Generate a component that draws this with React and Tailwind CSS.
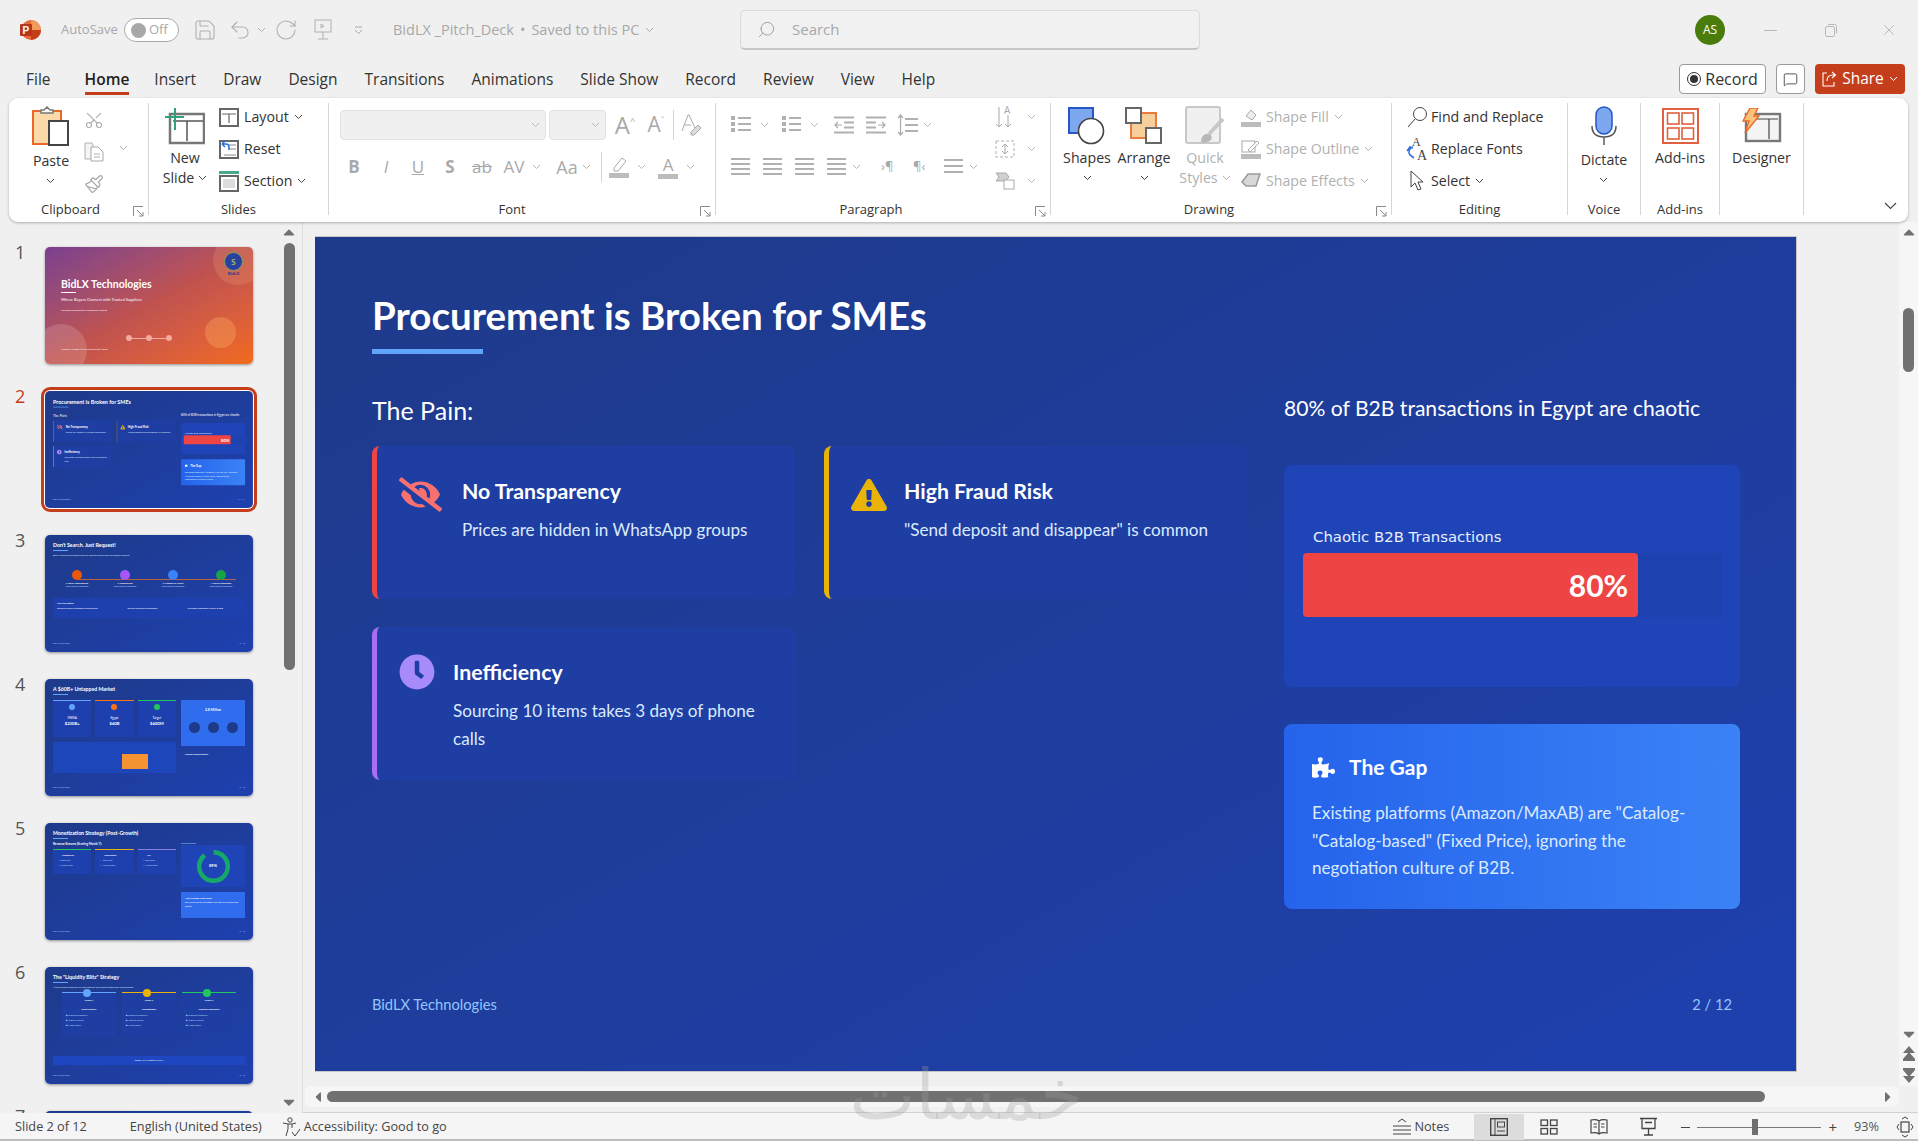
import React from 'react';
import { FaEyeSlash, FaExclamationTriangle, FaClock, FaPuzzlePiece, FaCaretUp, FaCaretDown, FaCaretLeft, FaCaretRight } from 'react-icons/fa';
import { Search, Scissors, Paintbrush, Undo2, RotateCw, Save, X, MessageSquare } from 'lucide-react';

const UI = 'font-["Open_Sans",sans-serif]';
const SLIDE = 'font-["Lato",sans-serif]';

const Chev = ({ c = '#555', className = '' }) => (
  <svg width="9" height="6" viewBox="0 0 9 6" className={`shrink-0 ${className}`}>
    <path d="M1 1l3.5 3.5L8 1" fill="none" stroke={c} strokeWidth="1" />
  </svg>
);

const Launcher = () => (
  <svg width="11" height="11" viewBox="0 0 11 11">
    <path d="M.5 10V.5H10M4 4l6 6M10 6v4H6" fill="none" stroke="#8a8a8a" strokeWidth="1" />
  </svg>
);

const Lines = ({ w = 20, rows = 3, gap = 6, c = '#b0b0b0', dots = false }) => (
  <svg width={w} height={rows * gap + 2} viewBox={`0 0 ${w} ${rows * gap + 2}`} className="shrink-0">
    {Array.from({ length: rows }).map((_, i) => (
      <rect key={i} x={dots ? 7 : 0} y={i * gap + 2} width={dots ? w - 7 : w} height="2" fill={c} />
    ))}
    {dots && Array.from({ length: rows }).map((_, i) => (
      <rect key={i} x="0" y={i * gap + 1} width="4" height="4" fill={c} />
    ))}
  </svg>
);

const Indent = ({ flip }) => (
  <svg width="20" height="20" viewBox="0 0 20 20" className={`shrink-0 ${flip ? '-scale-x-100' : ''}`}>
    <path d="M0 2.500h20M10 7.500h10M10 12.500h10M0 17.500h20" stroke="#b0b0b0" strokeWidth="2" />
    <path d="M8 10H1M4 7l-3 3 3 3" fill="none" stroke="#a9a9a9" strokeWidth="1.2" />
  </svg>
);

const LineSpacing = () => (
  <svg width="21" height="22" viewBox="0 0 21 22" className="shrink-0">
    <path d="M8 5h13M8 11h13M8 17h13" stroke="#b0b0b0" strokeWidth="2" />
    <path d="M3.500 1v20M1 4l2.500-3L6 4M1 18l2.500 3L6 18" fill="none" stroke="#a9a9a9" strokeWidth="1.200" />
  </svg>
);

// ---- big ribbon icons ----
const PasteIcon = () => (
  <svg width="38" height="40" viewBox="0 0 38 40">
    <rect x="1" y="5" width="28" height="33" fill="#fbd9a8" stroke="#e9692c" strokeWidth="2" />
    <path d="M9 7V4h3l3-3 3 3h3v3z" fill="#fff" stroke="#777" strokeWidth="1.5" />
    <rect x="17" y="15" width="19" height="24" fill="#fff" stroke="#444" strokeWidth="2" />
  </svg>
);

const CopyIcon = () => (
  <svg width="20" height="20" viewBox="0 0 20 20">
    <path d="M1 1h7l1 2v14H1z" fill="#f4f4f4" stroke="#b0b0b0" />
    <path d="M7 5h7l5 5v9H7z" fill="#fff" stroke="#a9a9a9" />
    <path d="M10 12h6M10 15h6" stroke="#b0b0b0" />
  </svg>
);

const NewSlideIcon = () => (
  <svg width="40" height="38" viewBox="0 0 40 38">
    <rect x="5" y="7" width="34" height="29" fill="#fff" stroke="#777" strokeWidth="2.5" />
    <path d="M8 14h30M22 14v20" stroke="#555" strokeWidth="1.5" />
    <path d="M10 1v22M0 10h19" stroke="#2ea17f" strokeWidth="2" />
  </svg>
);

const SmallSlide = ({ variant }) => (
  <svg width="20" height="21" viewBox="0 0 20 21" className="shrink-0">
    {variant === 'section' && <rect x="0" y="0" width="20" height="3" fill="#4aa88d" />}
    <rect x="1" y={variant === 'section' ? 5 : 2} width="18" height={variant === 'section' ? 15 : 17} fill="#fff" stroke="#666" strokeWidth="2" />
    {variant === 'layout' && <path d="M3 7h14M10 7v9" stroke="#666" strokeWidth="1.2" />}
    {variant === 'section' && <rect x="4" y="8" width="12" height="9" fill="#ddd" />}
    {variant === 'reset' && (
      <>
        <path d="M9 6h8M11 10h6M5 16h12" stroke="#888" strokeWidth="1" />
        <path d="M3 5l3-3M3 5l3 3M3 5h4a3 3 0 0 1 3 3v3" fill="none" stroke="#2f6fe0" strokeWidth="1.6" />
      </>
    )}
  </svg>
);

const ShapesIcon = () => (
  <svg width="38" height="38" viewBox="0 0 38 38">
    <rect x="1" y="1" width="24" height="25" fill="#7da7ee" stroke="#2456c5" strokeWidth="2" />
    <circle cx="23" cy="24" r="12.5" fill="#fff" stroke="#444" strokeWidth="1.6" />
  </svg>
);

const ArrangeIcon = () => (
  <svg width="38" height="38" viewBox="0 0 38 38">
    <rect x="6" y="6" width="25" height="25" fill="#f7cf9c" stroke="#e87c3c" strokeWidth="2" />
    <rect x="1" y="1" width="15" height="15" fill="#fff" stroke="#666" strokeWidth="2" />
    <rect x="21" y="21" width="15" height="15" fill="#fff" stroke="#666" strokeWidth="2" />
  </svg>
);

const QuickIcon = () => (
  <svg width="40" height="40" viewBox="0 0 40 40">
    <rect x="1" y="1" width="34" height="36" rx="2" fill="#f0f0f0" stroke="#c8c8c8" strokeWidth="2" />
    <path d="M38 13L24 28" stroke="#c8c8c8" strokeWidth="4" />
    <path d="M16 36c0-6 4-9 8-8 3 1 3 4 2 6-2 2-6 3-10 2z" fill="#b8b8b8" />
  </svg>
);

const MicIcon = () => (
  <svg width="26" height="40" viewBox="0 0 26 40">
    <rect x="5" y="1" width="16" height="27" rx="8" fill="#7da7ee" stroke="#2456c5" strokeWidth="1.5" />
    <path d="M1 20c0 8 5 11 12 11s12-3 12-11" fill="none" stroke="#555" strokeWidth="1.5" />
    <path d="M13 31v8" stroke="#777" strokeWidth="1.8" />
  </svg>
);

const AddinsIcon = () => (
  <svg width="37" height="36" viewBox="0 0 37 36">
    <rect x="1" y="1" width="35" height="34" fill="#fff" stroke="#e0603f" strokeWidth="2" />
    <rect x="5.500" y="5" width="11.500" height="11" fill="none" stroke="#e0603f" strokeWidth="1.6" />
    <rect x="20" y="5" width="11.500" height="11" fill="none" stroke="#e0603f" strokeWidth="1.6" />
    <rect x="5.500" y="20" width="11.500" height="11" fill="none" stroke="#e0603f" strokeWidth="1.6" />
    <rect x="20" y="20" width="11.500" height="11" fill="none" stroke="#e0603f" strokeWidth="1.6" />
  </svg>
);

const DesignerIcon = () => (
  <svg width="40" height="36" viewBox="0 0 40 36">
    <rect x="4" y="6" width="34" height="27" fill="#f4f4f4" stroke="#777" strokeWidth="2.4" />
    <path d="M8 11h28M27 11v20" stroke="#444" strokeWidth="1.2" />
    <path d="M8 0h8l-4 8h5L3 25l4-12H1z" fill="#fbc27a" stroke="#e8692c" strokeWidth="1.4" />
  </svg>
);

const Big = ({ icon, lines, chev, gray, width, top = 'mt-0' }) => (
  <div className={`flex flex-col items-center shrink-0 pt-[1px] ${width}`}>
    <div className="h-[44px] flex items-center justify-center">{icon}</div>
    <div className={`flex flex-col items-center text-[14.2px] leading-[20px] ${top} ${gray ? 'text-[#b0b0b0]' : 'text-[#333]'}`}>
      {lines.map((l, i) => (
        <span key={l} className="flex items-center gap-[4px]">
          {l}
          {chev === 'inline' && i === lines.length - 1 && <Chev c={gray ? '#b0b0b0' : '#444'} />}
        </span>
      ))}
      {chev === 'below' && <Chev c="#444" className="mt-[7px]" />}
    </div>
  </div>
);

const RowItem = ({ icon, label, chev, gray, iconW = 'w-[20px]', gap = 'ml-[5px]' }) => (
  <div className={`h-[28px] flex items-center text-[14.2px] whitespace-nowrap ${gray ? 'text-[#b0b0b0]' : 'text-[#333]'}`}>
    <div className={`flex justify-center ${iconW}`}>{icon}</div>
    <span className={gap}>{label}</span>
    {chev && <Chev c={gray ? '#b0b0b0' : '#444'} className="ml-[5px]" />}
  </div>
);

const Group = ({ width, label, labelPad = '', launcher, last, children }) => (
  <div className={`relative flex flex-col shrink-0 h-[112px] ${width} ${last ? '' : 'border-r border-[#d6d6d6]'}`}>
    <div className="h-[97px] flex shrink-0">{children}</div>
    <div className={`h-[20px] shrink-0 flex items-center justify-center text-[13px] text-[#333] ${labelPad}`}>{label}</div>
    {launcher && <div className="absolute right-[4px] bottom-[-2px] flex"><Launcher /></div>}
  </div>
);

const G = ({ children, className = '' }) => (
  <span className={`flex items-center justify-center text-[#a9a9a9] ${className}`}>{children}</span>
);

const Ribbon = () => (
  <div className={`ml-[9px] w-[1899px] h-[124px] shrink-0 bg-white rounded-[9px] shadow-[0_1px_3px_rgba(0,0,0,0.28)] flex pt-[5px] relative z-10 ${UI}`}>
    <Group width="w-[140px]" label="Clipboard" labelPad="pr-[16px]" launcher>
      <Big width="w-[60px] ml-[12px]" icon={<PasteIcon />} lines={['Paste']} chev="below" top="mt-[3px]" />
      <div className="flex flex-col w-[26px] items-center pt-[1px]">
        <div className="h-[32px] flex items-center"><Scissors size={20} color="#a9a9a9" strokeWidth={1.3} className="-rotate-90" /></div>
        <div className="h-[32px] flex items-center"><CopyIcon /></div>
        <div className="h-[32px] flex items-center"><Paintbrush size={20} color="#a9a9a9" strokeWidth={1.5} /></div>
      </div>
      <div className="ml-[12px] h-[90px] flex items-center"><Chev c="#b0b0b0" /></div>
    </Group>

    <Group width="w-[180px]" label="Slides">
      <Big width="w-[72px]" icon={<NewSlideIcon />} lines={['New', 'Slide']} chev="inline" />
      <div className="flex flex-col gap-[4px] ml-[-2px]">
        <RowItem icon={<SmallSlide variant="layout" />} label="Layout" chev />
        <RowItem icon={<SmallSlide variant="reset" />} label="Reset" />
        <RowItem icon={<SmallSlide variant="section" />} label="Section" chev />
      </div>
    </Group>

    <Group width="w-[387px]" label="Font" labelPad="pr-[20px]" launcher>
      <div className="flex flex-col ml-[11px] pt-[7px]">
        <div className="flex items-center h-[30px]">
          <div className="w-[206px] h-[30px] bg-[#f0f0f0] border border-[#e2e2e2] rounded-[4px] flex items-center justify-end pr-[5px]"><Chev c="#b8b8b8" /></div>
          <div className="w-[57px] h-[30px] ml-[3px] bg-[#f0f0f0] border border-[#e2e2e2] rounded-[4px] flex items-center justify-end pr-[5px]"><Chev c="#b8b8b8" /></div>
          <G className="w-[18px] ml-[10px] text-[24px]">A<sup className="text-[9px]">^</sup></G>
          <G className="w-[16px] ml-[14px] text-[21px]">A<sup className="text-[9px]">ˇ</sup></G>
          <div className="w-px h-[30px] bg-[#d6d6d6] ml-[9px]" />
          <svg className="ml-[7px]" width="21" height="24" viewBox="0 0 21 24"><path d="M1 18L7 2h1l6 13M3.500 12H10" fill="none" stroke="#a9a9a9" /><path d="M10 19l7-7 3 3-7 7h-3z" fill="#dcdcdc" stroke="#a9a9a9" /></svg>
        </div>
        <div className="flex items-center h-[30px] mt-[12px] text-[17px]">
          <G className="w-[32px] ml-[-2px] font-bold">B</G>
          <G className="w-[32px] italic">I</G>
          <G className="w-[32px] underline">U</G>
          <G className="w-[32px] font-bold">S</G>
          <G className="w-[32px] line-through">ab</G>
          <G className="w-[32px]">AV</G>
          <Chev c="#b8b8b8" className="ml-[2px]" />
          <G className="w-[30px] ml-[11px] text-[18px]">Aa</G>
          <Chev c="#b8b8b8" />
          <div className="w-px h-[30px] bg-[#d6d6d6] ml-[10px]" />
          <div className="w-[26px] ml-[4px] flex flex-col items-center">
            <svg width="20" height="22" viewBox="0 0 20 22"><path d="M5 12l8-10 4 3-8 10H5z" fill="none" stroke="#a9a9a9" /><rect y="17" width="20" height="5" fill="#bcbcbc" /></svg>
          </div>
          <Chev c="#b8b8b8" className="ml-[5px]" />
          <div className="w-[24px] ml-[10px] flex flex-col items-center text-[#a9a9a9] leading-[18px]">
            A<div className="w-[20px] h-[5px] bg-[#bcbcbc]" />
          </div>
          <Chev c="#b8b8b8" className="ml-[6px]" />
        </div>
      </div>
    </Group>

    <Group width="w-[335px]" label="Paragraph" labelPad="pr-[24px]" launcher>
      <div className="w-[279px] pt-[7px] pl-[15px] flex flex-col">
        <div className="flex items-center h-[30px]">
          <div className="w-[51px] flex items-center gap-[9px]"><Lines dots /><Chev c="#b8b8b8" /></div>
          <div className="w-[52px] flex items-center gap-[9px]"><Lines dots w={19} /><Chev c="#b8b8b8" /></div>
          <div className="w-[32px] flex"><Indent /></div>
          <div className="w-[31px] flex"><Indent flip /></div>
          <div className="flex items-center gap-[5px]"><LineSpacing /><Chev c="#b8b8b8" /></div>
        </div>
        <div className="flex items-center h-[30px] mt-[12px]">
          <div className="w-[32px] flex"><Lines w={19} rows={4} gap={5} /></div>
          <div className="w-[32px] flex"><Lines w={19} rows={4} gap={5} /></div>
          <div className="w-[32px] flex"><Lines w={19} rows={4} gap={5} /></div>
          <div className="w-[54px] flex items-center gap-[6px]"><Lines w={19} rows={4} gap={5} /><Chev c="#b8b8b8" /></div>
          <div className="w-[32px] text-[13px] text-[#a9a9a9]">›¶</div>
          <div className="w-[31px] text-[13px] text-[#a9a9a9]">¶‹</div>
          <div className="flex items-center gap-[6px]"><Lines w={19} rows={3} gap={6} /><Chev c="#b8b8b8" /></div>
        </div>
      </div>
      <div className="flex flex-col gap-[4px]">
        <div className="h-[28px] flex items-center gap-[12px]"><svg width="20" height="24" viewBox="0 0 20 24"><path d="M4 2v20M1 19l3 3 3-3M13 10v12M10 19l3 3 3-3" fill="none" stroke="#a9a9a9" /><text x="9" y="9" fontSize="10" fill="#a9a9a9" fontFamily="Open Sans">A</text></svg><Chev c="#b8b8b8" /></div>
        <div className="h-[28px] flex items-center gap-[12px]"><svg width="20" height="20" viewBox="0 0 20 20"><rect x="1" y="2" width="18" height="16" fill="none" stroke="#b0b0b0" strokeDasharray="3 2" /><path d="M10 5v10M7 8l3-3 3 3M7 12l3 3 3-3" fill="none" stroke="#a9a9a9" /></svg><Chev c="#b8b8b8" /></div>
        <div className="h-[28px] flex items-center gap-[12px]"><svg width="20" height="18" viewBox="0 0 20 18"><path d="M1 1h10l3 4-3 4H1l3-4z" fill="#cfcfcf" stroke="#a9a9a9" /><rect x="9" y="8" width="10" height="9" fill="#fff" stroke="#a9a9a9" /></svg><Chev c="#b8b8b8" /></div>
      </div>
    </Group>

    <Group width="w-[341px]" label="Drawing" labelPad="pr-[24px]" launcher>
      <Big width="w-[62px] ml-[5px]" icon={<ShapesIcon />} lines={['Shapes']} chev="below" />
      <Big width="w-[52px]" icon={<ArrangeIcon />} lines={['Arrange']} chev="below" />
      <Big width="w-[70px]" icon={<QuickIcon />} lines={['Quick', 'Styles']} chev="inline" gray />
      <div className="flex flex-col gap-[4px] ml-[1px]">
        <RowItem gray icon={<svg width="20" height="20" viewBox="0 0 20 20"><path d="M5 9l5-6 5 5-4 5z" fill="#eee" stroke="#a9a9a9" /><rect y="15" width="20" height="5" fill="#bcbcbc" /></svg>} label="Shape Fill" chev />
        <RowItem gray icon={<svg width="20" height="20" viewBox="0 0 20 20"><rect x="1" y="2" width="13" height="11" fill="none" stroke="#a9a9a9" /><path d="M7 11l9-9 2 2-9 9z" fill="#fff" stroke="#a9a9a9" /><rect y="15" width="20" height="5" fill="#bcbcbc" /></svg>} label="Shape Outline" chev />
        <RowItem gray icon={<svg width="20" height="18" viewBox="0 0 20 18"><path d="M1 10l6-8h12l-4 12H5z" fill="#d8d8d8" stroke="#9a9a9a" strokeWidth="1.5" /></svg>} label="Shape Effects" chev />
      </div>
    </Group>

    <Group width="w-[176px]" label="Editing">
      <div className="flex flex-col gap-[4px] ml-[14px]">
        <RowItem iconW="w-[22px]" gap="ml-[3px]" icon={<svg width="21" height="22" viewBox="0 0 21 22"><circle cx="13" cy="8" r="6.500" fill="none" stroke="#444" /><path d="M8 13L1 21" stroke="#444" /></svg>} label="Find and Replace" />
        <RowItem iconW="w-[22px]" gap="ml-[3px]" icon={<svg width="22" height="26" viewBox="0 0 22 26"><text x="6" y="10" fontSize="12" fill="#444" fontFamily="Liberation Serif">A</text><text x="11" y="24" fontSize="14" fill="#444" fontFamily="Liberation Serif">A</text><path d="M7 11a5 5 0 0 0-3 8l4 3M1 15l3-4 3 1" fill="none" stroke="#2f6fe0" strokeWidth="1.6" /></svg>} label="Replace Fonts" />
        <RowItem iconW="w-[22px]" gap="ml-[3px]" icon={<svg width="16" height="22" viewBox="0 0 16 22"><path d="M2 1v16l4-4 3 7 3-1-3-7h5z" fill="#fff" stroke="#444" /></svg>} label="Select" chev />
      </div>
    </Group>

    <Group width="w-[73px]" label="Voice">
      <Big width="w-full" icon={<MicIcon />} lines={['Dictate']} chev="below" top="mt-[2px]" />
    </Group>
    <Group width="w-[79px]" label="Add-ins">
      <Big width="w-full" icon={<AddinsIcon />} lines={['Add-ins']} />
    </Group>
    <Group width="w-[84px]" label="">
      <Big width="w-full" icon={<DesignerIcon />} lines={['Designer']} />
    </Group>
    <div className="flex-1 flex items-end justify-end pr-[11px] pb-[12px]">
      <svg width="13" height="8" viewBox="0 0 13 8"><path d="M1 1l5.500 5.500L12 1" fill="none" stroke="#444" strokeWidth="1.1" /></svg>
    </div>
  </div>
);

const LogoIcon = () => (
  <svg width="22" height="22" viewBox="0 0 22 22" className="shrink-0">
    <circle cx="12" cy="11" r="10" fill="#e8693a" />
    <path d="M12 1a10 10 0 0 1 10 10H12z" fill="#f29a5c" />
    <path d="M12 21a10 10 0 0 0 10-10H12z" fill="#c43e1c" />
    <rect x="1" y="5" width="12" height="12" rx="1" fill="#b7361a" />
    <text x="3.500" y="15" fontSize="10" fontWeight="700" fill="#fff" fontFamily="Liberation Sans">P</text>
  </svg>
);

const TitleBar = () => (
  <div className={`h-[60px] shrink-0 flex items-center text-[14.5px] text-[#a8a8a8] ${UI}`}>
    <div className="ml-[19px]"><LogoIcon /></div>
    <span className="ml-[20px] w-[54px] text-[13px] whitespace-nowrap">AutoSave</span>
    <div className="ml-[9px] w-[55px] h-[24px] rounded-full border border-[#aaa] bg-white flex items-center pl-[6px] gap-[3px] text-[13px]">
      <span className="w-[15px] h-[15px] rounded-full bg-[#a8a8a8]" />Off
    </div>
    <Save className="ml-[14px]" size={24} strokeWidth={1.1} color="#b0b0b0" />
    <Undo2 className="ml-[11px]" size={24} strokeWidth={1.1} color="#b0b0b0" />
    <Chev c="#b0b0b0" className="ml-[5px]" />
    <RotateCw className="ml-[8px]" size={24} strokeWidth={1.1} color="#b0b0b0" />
    <svg className="ml-[15px]" width="20" height="22" viewBox="0 0 20 22"><rect x="2" y="1" width="16" height="12" fill="none" stroke="#b0b0b0" /><path d="M10 13v7M5 20h10M8 5v4l3-2z" stroke="#b0b0b0" fill="none" /></svg>
    <svg className="ml-[21px]" width="9" height="9" viewBox="0 0 9 9"><path d="M1 1h7M1 4l3.500 3.500L8 4" stroke="#a8a8a8" fill="none" /></svg>
    <span className="ml-[30px] w-[265px] flex items-center whitespace-nowrap">BidLX _Pitch_Deck<span className="mx-[6px]">•</span>Saved to this PC <Chev c="#a8a8a8" className="ml-[6px]" /></span>
    <div className="ml-[82px] w-[460px] h-[40px] rounded-[5px] bg-[#f1f1f1] border border-[#dadada] border-b-2 border-b-[#c6c6c6] flex items-center pl-[16px] text-[15px] text-[#a8a8a8]">
      <Search size={19} strokeWidth={1.2} className="-scale-x-100" color="#a0a0a0" />
      <span className="ml-[16px]">Search</span>
    </div>
    <div className="ml-[495px] w-[30px] h-[30px] rounded-full bg-[#4a7c0b] flex items-center justify-center text-[12px] text-white">AS</div>
    <div className="ml-[39px] w-[13px] h-px bg-[#b8b8b8]" />
    <svg className="ml-[48px]" width="12" height="13" viewBox="0 0 12 13"><rect x=".5" y="2.500" width="9" height="10" rx="1.500" fill="none" stroke="#b8b8b8" /><path d="M3 .5h6a2 2 0 0 1 2.500 2v7" fill="none" stroke="#b8b8b8" /></svg>
    <X className="ml-[43px]" size={18} strokeWidth={1} color="#a8a8a8" />
  </div>
);

const tabs = ['File', 'Home', 'Insert', 'Draw', 'Design', 'Transitions', 'Animations', 'Slide Show', 'Record', 'Review', 'View', 'Help'];

const TabRow = () => (
  <div className={`h-[38px] shrink-0 flex items-center pl-[26px] pr-[13px] gap-[27px] text-[15.5px] text-[#333] ${UI}`}>
    {tabs.map((t) => (
      <div key={t} className={`relative h-[38px] pt-[2px] flex items-center whitespace-nowrap ${t === 'Home' ? 'ml-[7px] mr-[-2px] font-semibold text-[#222]' : ''}`}>
        {t}
        {t === 'Home' && <div className="absolute left-0 right-0 bottom-[3px] h-[3px] bg-[#c43e1c]" />}
      </div>
    ))}
    <div className="ml-auto flex items-center gap-[10px]">
      <div className="w-[87px] h-[30px] bg-white border border-[#9a9a9a] rounded-[4px] flex items-center justify-center gap-[4px] text-[16px]">
        <span className="w-[14px] h-[14px] rounded-full border border-[#333] flex items-center justify-center"><span className="w-[8px] h-[8px] rounded-full bg-[#333]" /></span>Record
      </div>
      <div className="w-[29px] h-[30px] bg-white border border-[#9a9a9a] rounded-[4px] flex items-center justify-center"><MessageSquare size={15} strokeWidth={1.3} color="#333" /></div>
      <div className="w-[90px] h-[30px] bg-[#c43e1c] rounded-[4px] flex items-center justify-center gap-[5px] text-[15.5px] text-white">
        <svg width="15" height="16" viewBox="0 0 15 16"><path d="M5 2H1v13h11v-4M5 10c0-4 2-6 6-6h2M10 1l3.500 3L10 7" fill="none" stroke="#fff" strokeWidth="1.100" /></svg>Share<Chev c="#fff" />
      </div>
    </div>
  </div>
);

// ---- the slide itself ----
const PainCard = ({ border, icon, iconGap, title, children }) => (
  <div className={`h-[153px] rounded-[8px] border-l-[5px] bg-[#1e3ea3] pl-[22px] pr-[24px] pt-[27px] flex items-start ${border}`}>
    <div className={`shrink-0 ${iconGap}`}>{icon}</div>
    <div className="pt-[4px]">
      <h3 className="text-[21.3px] leading-[28px] font-bold text-white">{title}</h3>
      <p className="mt-[11px] text-[17.1px] leading-[28px] text-[#dbeafe]">{children}</p>
    </div>
  </div>
);

const MainSlide = () => (
  <div className={`w-[1481px] h-[834px] shrink-0 flex flex-col pl-[57px] pr-[56px] text-white bg-linear-to-br from-[#1e3a8a] to-[#1e40af] ${SLIDE}`}>
    <h1 className="mt-[56px] text-[38.5px] leading-[44px] font-bold whitespace-nowrap">Procurement is Broken for SMEs</h1>
    <div className="mt-[12px] w-[111px] h-[5px] bg-[#60a5fa]" />
    <div className="mt-[39px] flex gap-[36px]">
      <div className="w-[876px]">
        <div className="text-[25px] leading-[30px] mt-[2px]">The Pain:</div>
        <div className="mt-[21px] grid grid-cols-[423px_424px] gap-x-[29px] gap-y-[28px]">
          <PainCard border="border-[#ef4444]" icon={<FaEyeSlash size={43} color="#f87171" />} iconGap="mr-[20px]" title="No Transparency">Prices are hidden in WhatsApp groups</PainCard>
          <PainCard border="border-[#eab308]" icon={<FaExclamationTriangle size={36} color="#eab308" className="mt-[4px]" />} iconGap="mr-[17px]" title="High Fraud Risk">"Send deposit and disappear" is common</PainCard>
          <PainCard border="border-[#a86ff5]" icon={<FaClock size={36} color="#a78bfa" />} iconGap="mr-[18px]" title="Inefficiency">Sourcing 10 items takes 3 days of phone calls</PainCard>
        </div>
      </div>
      <div className="w-[456px]">
        <div className="text-[21.1px] leading-[30px] whitespace-nowrap">80% of B2B transactions in Egypt are chaotic</div>
        <div className="mt-[42px] h-[222px] rounded-[8px] bg-[#1e44b8] pt-[60px]">
          <div className={'pl-[29px] text-[14.9px] leading-[24px] text-[#e8efff] font-["DejaVu_Sans",sans-serif]'}>Chaotic B2B Transactions</div>
          <div className="ml-[19px] mr-[18px] mt-[4px] h-[64px] rounded-[4px] bg-[#1e41b0]">
            <div className="w-4/5 h-full rounded-[4px] bg-[#ef4444] flex items-center justify-end pr-[10px] text-[30px] font-bold">80%</div>
          </div>
        </div>
        <div className="mt-[37px] h-[185px] rounded-[8px] bg-linear-to-r from-[#2563eb] to-[#3b82f6] pl-[28px] pt-[29px]">
          <div className="flex items-center gap-[14px] h-[28px] text-[21px] font-bold">
            <FaPuzzlePiece size={23} />The Gap
          </div>
          <p className="mt-[18px] text-[17.1px] leading-[27.5px] text-[#dbeafe] whitespace-nowrap">
            Existing platforms (Amazon/MaxAB) are "Catalog-<br />"Catalog-based" (Fixed Price), ignoring the<br />negotiation culture of B2B.
          </p>
        </div>
      </div>
    </div>
    <div className="mt-auto mb-[57px] pr-[8px] flex justify-between text-[14.7px] leading-[20px] text-[#93c5fd]">
      <span>BidLX Technologies</span><span>2 / 12</span>
    </div>
  </div>
);

// ---- thumbnails ----
const ThumbHead = ({ title, sub }) => (
  <>
    <div className="text-[5.2px] leading-[7px] font-bold text-white whitespace-nowrap">{title}</div>
    <div className="mt-[1px] w-[15px] h-[1px] bg-[#60a5fa]" />
    {sub && <div className="mt-[3px] text-[2.4px] leading-[4px] text-[#dbeafe] whitespace-nowrap">{sub}</div>}
  </>
);

const ThumbFoot = () => (
  <div className="mt-auto mb-[7px] flex justify-between text-[2px] leading-[3px] text-[#93c5fd]">
    <span>BidLX Technologies</span><span>3 / 12</span>
  </div>
);

const BlueThumb = ({ children }) => (
  <div className={`w-full h-full flex flex-col px-[8px] pt-[7px] bg-linear-to-br from-[#1e3a8a] to-[#1e40af] ${SLIDE}`}>{children}</div>
);

const Thumb1 = () => (
  <div className={`relative w-full h-full flex flex-col pl-[16px] pt-[32px] text-white bg-linear-to-br from-[#7a3f8f] via-[#c0524f] to-[#f26a16] ${SLIDE}`}>
    <div className="absolute right-[-10px] top-[-12px] w-[50px] h-[50px] rounded-full bg-[#f5b57e]/20" />
    <div className="absolute right-[17px] top-[70px] w-[31px] h-[31px] rounded-full bg-[#ffb060]/35" />
    <div className="absolute left-[-10px] bottom-[-12px] w-[52px] h-[52px] rounded-full bg-white/15" />
    <div className="absolute right-[10px] top-[5px] flex flex-col items-center">
      <div className="w-[19px] h-[19px] rounded-full border border-[#7aa060] bg-[#2b3f9e] flex items-center justify-center text-[8px] font-bold text-[#a9c36a]">S</div>
      <span className="text-[4.4px] leading-[6px] font-bold text-[#27378f]">BidLX</span>
    </div>
    <div className="relative text-[10.5px] leading-[11px] font-bold whitespace-nowrap">BidLX Technologies</div>
    <div className="relative mt-[2px] w-[15px] h-px bg-white" />
    <div className="relative mt-[4px] text-[4px] leading-[6px] whitespace-nowrap">Where Buyers Connect with Trusted Suppliers</div>
    <div className="relative mt-[6px] text-[2.4px] leading-[4px] whitespace-nowrap">The B2B Procurement Marketplace in Egypt</div>
    <div className="relative mt-[22px] ml-[65px] flex items-center">
      <span className="w-[6px] h-[6px] rounded-full bg-[#f3a9a0]" /><span className="w-[14px] h-px bg-[#f3a9a0]" />
      <span className="w-[6px] h-[6px] rounded-full bg-[#f3a9a0]" /><span className="w-[14px] h-px bg-[#f3a9a0]" />
      <span className="w-[6px] h-[6px] rounded-full bg-[#f3a9a0]" />
    </div>
    <div className="relative mt-[6px] text-[2.6px] leading-[4px] whitespace-nowrap">Ahmed Mokhtar | Pre-Seed Round | 2025</div>
  </div>
);

const Thumb3 = () => (
  <BlueThumb>
    <ThumbHead title="Don't Search. Just Request!" sub="BidLX turns procurement from an endless search into one simple request" />
    <div className="relative mt-[12px] h-[24px] flex justify-around">
      <div className="absolute left-[24px] right-[9px] top-[9px] h-px bg-[#f97316]/70" />
      {[['bg-[#ea580c]', '1. Buyer Posts Request'], ['bg-[#a855f7]', '2. Suppliers Bid'], ['bg-[#3b82f6]', '3. Compare & Accept'], ['bg-[#16a34a]', '4. Secure Transaction']].map(([c, t]) => (
        <div key={t} className="relative w-[46px] flex flex-col items-center text-white">
          <span className={`w-[10px] h-[10px] rounded-full ${c}`} />
          <span className="mt-[1px] text-[2.2px] leading-[4px] font-bold whitespace-nowrap">{t}</span>
          <span className="text-[2px] leading-[3px] text-[#bfdbfe] whitespace-nowrap">Posts items and quantities</span>
        </div>
      ))}
    </div>
    <div className="mt-[4px] h-[20px] bg-[#1e40af] px-[4px] pt-[3px] text-[2.2px] leading-[4px] text-white">
      <div className="font-bold">Why this Matters</div>
      <div className="flex justify-between pr-[18px] mt-[1px]"><span>Removes chaos of traditional procurement</span><span>Drives transparent competition</span><span>Leverages negotiation culture of B2B</span></div>
    </div>
    <ThumbFoot />
  </BlueThumb>
);

const MarketCard = ({ border, name, value, c }) => (
  <div className={`flex-1 h-[37px] bg-[#1e40af] border-t flex flex-col items-center pt-[3px] text-[3.2px] text-white ${border}`}>
    <span className={`w-[6px] h-[6px] rounded-full ${c}`} />
    <span className="mt-[6px] leading-[4px]">{name}</span>
    <span className="mt-[1px] text-[4.2px] leading-[6px] font-bold">{value}</span>
  </div>
);

const Thumb4 = () => (
  <BlueThumb>
    <ThumbHead title="A $60B+ Untapped Market" />
    <div className="mt-[5px] flex gap-[5px] flex-1 min-h-0">
      <div className="w-[123px]">
        <div className="flex gap-[4px]">
          <MarketCard border="border-[#60a5fa]" name="MENA" value="$230B+" c="bg-[#60a5fa]" />
          <MarketCard border="border-[#f97316]" name="Egypt" value="$60B" c="bg-[#f97316]" />
          <MarketCard border="border-[#22c55e]" name="Target" value="$600M" c="bg-[#22c55e]" />
        </div>
        <div className="mt-[5px] h-[31px] bg-[#1d46ba] flex items-end justify-end pr-[28px]">
          <div className="mb-[4px] w-[26px] h-[15px] bg-[#f59332]" />
        </div>
      </div>
      <div className="flex-1">
        <div className="h-[46px] bg-[#2f6cee] flex flex-col items-center pt-[3px] text-[2.6px] text-white">
          <span className="text-[3.4px] font-bold leading-[8px] mt-[3px]">2.8 Million</span>
          <div className="mt-[8px] flex gap-[8px]">
            <span className="w-[11px] h-[11px] rounded-full bg-[#1e3a8a]" />
            <span className="w-[11px] h-[11px] rounded-full bg-[#1e3a8a]" />
            <span className="w-[11px] h-[11px] rounded-full bg-[#1e3a8a]" />
          </div>
        </div>
        <div className="mt-[6px] pl-[4px] text-[2.6px] leading-[5px] font-bold text-white">Market Opportunity</div>
      </div>
    </div>
    <ThumbFoot />
  </BlueThumb>
);

const RevCard = ({ border, title }) => (
  <div className={`flex-1 h-[25px] bg-[#1e40af] border-t pl-[5px] pt-[3px] text-[2.2px] leading-[5px] text-white ${border}`}>
    <div className="font-bold pl-[4px]">{title}</div>
    <div className="text-[#bfdbfe]">✓ Basic plan</div>
    <div className="text-[#bfdbfe]">✓ Premium tier</div>
  </div>
);

const Thumb5 = () => (
  <BlueThumb>
    <ThumbHead title="Monetization Strategy (Post-Growth)" />
    <div className="mt-[3px] flex gap-[5px]">
      <div className="w-[123px]">
        <div className="text-[3px] leading-[5px] font-bold text-white whitespace-nowrap">Revenue Streams (Starting Month 7):</div>
        <div className="mt-[2px] flex gap-[4px]">
          <RevCard border="border-[#22c55e]" title="Commission" />
          <RevCard border="border-[#eab308]" title="Subscription" />
          <RevCard border="border-[#8b7fe0]" title="Ads" />
        </div>
      </div>
      <div className="flex-1">
        <div className="text-[2px] leading-[3px] text-[#bfdbfe]">Profit Generation</div>
        <div className="h-[42px] bg-[#1e44b8] flex items-center justify-center">
          <div className="relative w-[33px] h-[33px] flex items-center justify-center text-[4px] font-bold text-white">
            <svg className="absolute inset-0 -rotate-90" width="33" height="33" viewBox="0 0 33 33"><circle cx="16.500" cy="16.500" r="14.300" fill="none" stroke="#16a866" strokeWidth="4.500" strokeDasharray="80 90" /></svg>
            89%
          </div>
        </div>
        <div className="mt-[5px] h-[26px] bg-[#2f6cee] p-[4px] text-[2.2px] leading-[4px] text-white">
          <div className="font-bold">High-Leverage Profit Model</div>
          <div>89% of fees go to the bottom line with low variable cost growth</div>
        </div>
      </div>
    </div>
    <ThumbFoot />
  </BlueThumb>
);

const Phase = ({ border, dot, name, title }) => (
  <div className={`relative w-[54px] h-[45px] bg-[#1e3ea3] border-t text-center text-[2.4px] leading-[5px] text-white ${border}`}>
    <span className={`absolute left-[21px] top-[-4px] w-[8px] h-[8px] rounded-full ${dot}`} />
    <div className="pt-[5px] font-bold">{name}</div>
    <div className="mt-[4px] font-bold">{title}</div>
    <div className="mt-[1px] pl-[4px] text-left text-[#bfdbfe]">■ Onboard suppliers</div>
    <div className="pl-[4px] text-left text-[#bfdbfe]">■ Acquire buyers</div>
    <div className="pl-[4px] text-left text-[#bfdbfe]">■ Match deals</div>
  </div>
);

const Thumb6 = () => (
  <BlueThumb>
    <ThumbHead title={'The "Liquidity Blitz" Strategy'} sub="A three-phase approach to rapid growth and market dominance across Egypt" />
    <div className="mt-[2px] ml-[9px] flex gap-[6px]">
      <Phase border="border-[#60a5fa]" dot="bg-[#60a5fa]" name="Phase 1" title="Boot Partners" />
      <Phase border="border-[#eab308]" dot="bg-[#eab308]" name="Phase 2" title="Monetization" />
      <Phase border="border-[#22c55e]" dot="bg-[#22c55e]" name="Phase 3" title="Regional Expansion" />
    </div>
    <div className="mt-[19px] h-[9px] bg-[#1e46c0] flex items-center justify-center text-[2.2px] text-white">$600M GMV Target by Year 3</div>
    <ThumbFoot />
  </BlueThumb>
);

const Thumbs = [Thumb1, null, Thumb3, Thumb4, Thumb5, Thumb6, BlueThumb];

const ThumbPanel = () => (
  <div className="w-[300px] shrink-0 flex">
    <div className={`w-[278px] pt-[25px] overflow-hidden ${UI}`}>
      {Thumbs.map((T, i) => (
        <div key={i} className="h-[144px] flex">
          <div className={`w-[45px] pl-[15px] -mt-[5px] text-[18px] leading-[20px] ${i === 1 ? 'text-[#c43e1c]' : 'text-[#555]'}`}>{i + 1}</div>
          <div className={`w-[208px] h-[117px] rounded-[5px] overflow-hidden shrink-0 ${i === 1 ? 'shadow-[0_0_0_1px_#fff,0_0_0_4px_#c43e1c] overflow-visible' : 'shadow-[0_1px_3px_rgba(0,0,0,0.4)]'}`}>
            {T ? <T /> : (
              <div className="w-[208px] h-[117px] overflow-hidden rounded-[5px]">
                <div className="origin-top-left scale-[0.1404]"><MainSlide /></div>
              </div>
            )}
          </div>
        </div>
      ))}
    </div>
    <div className="w-[22px] flex flex-col items-center text-[#717171]">
      <FaCaretUp size={18} className="mt-[1px]" />
      <div className="mt-[2px] w-[11px] h-[427px] rounded-full bg-[#717171]" />
      <FaCaretDown size={18} className="mt-auto mb-[2px]" />
    </div>
  </div>
);

const DoubleArrow = ({ down }) => (
  <svg width="14" height="16" viewBox="0 0 14 16" className={down ? 'rotate-180' : ''}>
    <path d="M7 0l6 7H1zM7 6l6 7v2H1v-2z" fill="#717171" />
  </svg>
);

const MainArea = () => (
  <div className="flex-1 flex flex-col border-l border-[#dcdcdc] ml-[2px] min-w-0">
    <div className="h-[864px] flex">
      <div className="flex-1 pl-[12px] pt-[14px] min-w-0">
        <div className="w-[1482px] border-y border-r border-[#c6c6c6] border-l border-l-[#c6c6c6]"><div className="-ml-[1px]"><MainSlide /></div></div>
      </div>
      <div className="w-[19px] bg-[#f6f6f6] flex flex-col items-center text-[#717171]">
        <FaCaretUp size={18} className="mt-[1px]" />
        <div className="mt-[67px] w-[11px] h-[64px] rounded-full bg-[#717171]" />
        <FaCaretDown size={18} className="mt-auto" />
        <div className="mt-[3px]"><DoubleArrow /></div>
        <div className="mt-[5px] mb-[3px]"><DoubleArrow down /></div>
      </div>
    </div>
    <div className="h-[21px] ml-[2px] mr-[19px] bg-[#f6f6f6] rounded-[6px] flex items-center text-[#717171]">
      <FaCaretLeft size={16} className="ml-[5px]" />
      <div className="ml-[1px] w-[1438px] h-[11px] rounded-full bg-[#717171]" />
      <FaCaretRight size={16} className="ml-auto mr-[3px]" />
    </div>
    <div className="h-[6px] border-b border-[#d2d2d2]" />
  </div>
);

const StatusBar = () => (
  <div className={`h-[28px] shrink-0 pt-[2px] bg-[#f5f5f5] border-b-2 border-[#bdbdbd] flex items-center text-[12.7px] text-[#444] ${UI}`}>
    <span className="ml-[15px] whitespace-nowrap">Slide 2 of 12</span>
    <span className="ml-[43px] whitespace-nowrap">English (United States)</span>
    <svg className="ml-[20px]" width="19" height="21" viewBox="0 0 19 21"><circle cx="8" cy="3" r="2.200" fill="none" stroke="#444" /><path d="M1 6l5 1h4l4-1M6 7v5l-2 7M10 7v4M10 15l3 4 5-7" fill="none" stroke="#444" /></svg>
    <span className="ml-[3px] whitespace-nowrap">Accessibility: Good to go</span>
    <svg className="ml-auto" width="20" height="20" viewBox="0 0 20 20"><path d="M6 5l4-3 4 3M1 9h18M1 13h18M1 17h18" fill="none" stroke="#444" /></svg>
    <span className="ml-[2px] w-[60px]">Notes</span>
    <div className="w-[50px] h-[26px] bg-[#dcdcdc] flex items-center justify-center">
      <svg width="18" height="18" viewBox="0 0 18 18"><rect x=".7" y=".7" width="16.600" height="16.600" fill="none" stroke="#444" strokeWidth="1.4" /><path d="M5 1v16" stroke="#444" /><rect x="7.500" y="4" width="7" height="5" fill="none" stroke="#444" /><path d="M7 13h8" stroke="#444" /></svg>
    </div>
    <svg className="ml-[16px]" width="18" height="18" viewBox="0 0 18 18"><g fill="none" stroke="#444" strokeWidth="1.300"><rect x="1" y="2" width="6.500" height="5.500" /><rect x="10.500" y="2" width="6.500" height="5.500" /><rect x="1" y="10.500" width="6.500" height="5.500" /><rect x="10.500" y="10.500" width="6.500" height="5.500" /></g></svg>
    <svg className="ml-[32px]" width="18" height="18" viewBox="0 0 18 18"><path d="M9 3C7 1.500 4 1.500 1 2v13c3-.5 6-.5 8 1 2-1.500 5-1.500 8-1V2c-3-.5-6-.5-8 1zM9 3v13M3.500 6H7M3.500 9H7M11 6h3.500M11 9h3.500" fill="none" stroke="#444" strokeWidth="1.200" /></svg>
    <svg className="ml-[32px]" width="17" height="20" viewBox="0 0 17 20"><path d="M0 1.500h17M2 1.500v10h13v-10M8.500 11.500v6M4 18h9M5 5.500h7" fill="none" stroke="#444" strokeWidth="1.300" /></svg>
    <div className="ml-[24px] w-[9px] h-px bg-[#444]" />
    <div className="ml-[7px] w-[124px] h-px bg-[#777] flex items-center">
      <div className="ml-[55px] w-[6px] h-[16px] bg-[#6e6e6e]" />
    </div>
    <span className="ml-[7px] text-[15px] leading-[15px]">+</span>
    <span className="ml-[17px] text-[#555]">93%</span>
    <svg className="ml-[17px] mr-[4px]" width="18" height="22" viewBox="0 0 18 22"><rect x="5" y="6" width="8" height="10" fill="none" stroke="#444" strokeWidth="1.200" /><path d="M6 3l3-2 3 2M6 19l3 2 3-2M3 8l-2 3 2 3M15 8l2 3-2 3" fill="none" stroke="#444" /></svg>
  </div>
);

export default function App() {
  return (
    <div className="relative w-[1918px] h-[1141px] bg-[#f0f0f0] flex flex-col overflow-hidden">
      <TitleBar />
      <TabRow />
      <Ribbon />
      <div className="h-[891px] shrink-0 flex"><ThumbPanel /><MainArea /></div>
      <StatusBar />
      {/* site watermark sits over the bottom of the window */}
      <div dir="rtl" className={'absolute left-[853px] top-[1060px] w-[230px] text-center text-[70px] leading-[70px] text-[#9a9a9a]/30 whitespace-nowrap pointer-events-none font-["DejaVu_Sans",sans-serif]'}>خمسات</div>
    </div>
  );
}
